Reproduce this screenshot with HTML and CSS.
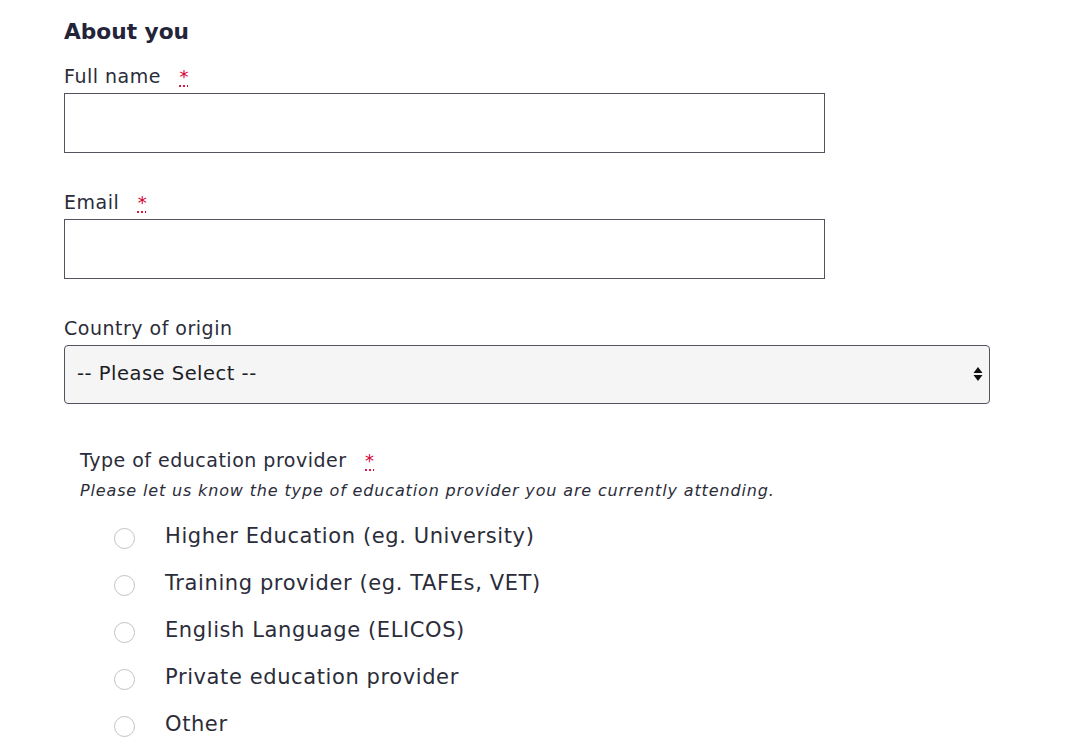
FILE: index.html
```html
<!DOCTYPE html>
<html lang="en">
<head>
<meta charset="utf-8">
<title>About you</title>
<link rel="stylesheet" href="styles.css">
</head>
<body>
<form class="form">
  <h2 class="heading">About you</h2>

  <div class="field">
    <label class="label" for="fullname">Full name <abbr class="req" title="required">*</abbr></label>
    <input class="text-input" id="fullname" type="text">
  </div>

  <div class="field">
    <label class="label" for="email">Email <abbr class="req" title="required">*</abbr></label>
    <input class="text-input" id="email" type="email">
  </div>

  <div class="field">
    <label class="label" for="country">Country of origin</label>
    <div class="select">
      <span class="select-text">-- Please Select --</span>
      <svg class="select-arrows" width="10" height="20" viewBox="0 0 10 20"><path d="M5 3 L9.5 9 H0.5 Z" fill="#111"/><path d="M5 17 L9.5 11 H0.5 Z" fill="#111"/></svg>
    </div>
  </div>

  <fieldset class="radio-group">
    <legend class="label group-label">Type of education provider <abbr class="req" title="required">*</abbr></legend>
    <p class="hint">Please let us know the type of education provider you are currently attending.</p>
    <ul class="options">
      <li class="option"><span class="radio"></span><span class="option-text">Higher Education (eg. University)</span></li>
      <li class="option"><span class="radio"></span><span class="option-text">Training provider (eg. TAFEs, VET)</span></li>
      <li class="option"><span class="radio"></span><span class="option-text">English Language (ELICOS)</span></li>
      <li class="option"><span class="radio"></span><span class="option-text">Private education provider</span></li>
      <li class="option"><span class="radio"></span><span class="option-text">Other</span></li>
    </ul>
  </fieldset>
</form>
</body>
</html>
```
FILE: styles.css
```css
html, body {
  margin: 0;
  padding: 0;
  background: #fff;
}
body {
  font-family: "DejaVu Sans", "Noto Sans", sans-serif;
  color: #2b2c3a;
}
.form {
  padding: 16px 0 0 64px;
  display: flex;
  flex-direction: column;
}
.heading {
  margin: 0;
  font-size: 21.7px;
  font-weight: 700;
  line-height: 32px;
  color: #23243a;
}
.field {
  display: flex;
  flex-direction: column;
}
.label {
  font-size: 19px;
  letter-spacing: 0.5px;
  line-height: 24px;
  color: #2b2c3a;
  margin-top: 16px;
  margin-bottom: 4px;
}
.field + .field .label {
  margin-top: 37px;
}
.req {
  color: #d50032;
  text-decoration: underline dotted;
  text-underline-offset: 3px;
  margin-left: 12px;
  font-size: 18px;
  letter-spacing: 0;
}
.text-input {
  box-sizing: border-box;
  width: 761px;
  height: 60px;
  border: 1px solid #52535f;
  border-radius: 0;
  margin: 0;
  padding: 0 12px;
  font: inherit;
}
.select {
  box-sizing: border-box;
  width: 926px;
  height: 59px;
  margin-top: 1px;
  border: 1px solid #52535f;
  border-radius: 4px;
  background: #f5f5f5;
  display: flex;
  align-items: center;
  justify-content: space-between;
  padding: 0 6px 2px 12px;
}
.select-text {
  font-size: 19.5px;
  letter-spacing: 0.5px;
  color: #1c1d26;
}
.radio-group {
  border: 0;
  margin: 42px 0 0 0;
  padding: 0 0 0 16px;
}
.group-label {
  padding: 0;
  margin: 0;
  line-height: 28px;
}
.hint {
  margin: 5px 0 0 0;
  font-size: 16px;
  letter-spacing: 0.85px;
  line-height: 22px;
  font-style: italic;
  color: #2b2c3a;
}
.options {
  list-style: none;
  margin: 19px 0 0 0;
  padding: 0 0 0 34px;
  display: flex;
  flex-direction: column;
  gap: 17px;
}
.option {
  display: flex;
  align-items: center;
  height: 30px;
}
.radio {
  box-sizing: border-box;
  width: 21px;
  height: 21px;
  border: 1px solid #c2c2c2;
  border-radius: 50%;
  margin-top: 4px;
  flex: none;
}
.option-text {
  margin-left: 30px;
  font-size: 21px;
  letter-spacing: 0.6px;
  color: #2b2c3a;
}
```
